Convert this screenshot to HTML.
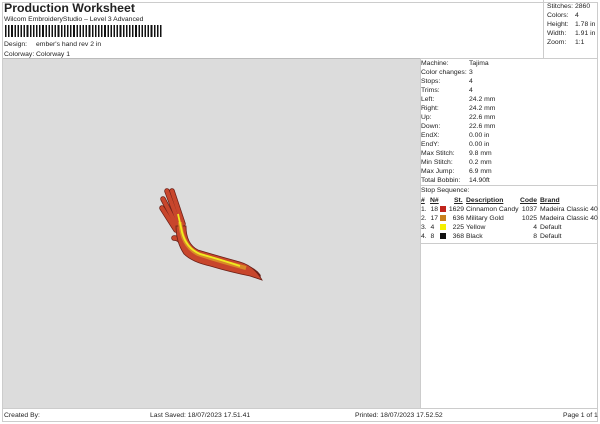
<!DOCTYPE html>
<html><head><style>
body{margin:0;width:600px;height:424px;background:#fff;position:relative;font-family:"Liberation Sans",sans-serif;font-size:6.8px;color:#222;overflow:hidden}
.a{position:absolute;white-space:nowrap;line-height:9px}
.u{text-decoration:underline;font-weight:bold}
</style></head><body>
<div class="a" style="left:4px;top:1px;font-size:12.3px;font-weight:bold;line-height:15px">Production Worksheet</div>
<div class="a" style="left:4px;top:15px">Wilcom EmbroideryStudio – Level 3 Advanced</div>
<div class="a" style="left:5px;top:25px;width:158px;height:12px;background:repeating-linear-gradient(90deg,#111 0 1.6px,#fff 1.6px 3.1px)"></div>
<div class="a" style="left:4px;top:40px">Design:</div><div class="a" style="left:36px;top:40px">ember's hand rev 2 in</div>
<div class="a" style="left:4px;top:50px">Colorway:</div><div class="a" style="left:36px;top:50px">Colorway 1</div>
<div class="a" style="left:2px;top:2px;width:596px;height:420px;border:1px solid #ccc;box-sizing:border-box"></div>
<div class="a" style="left:543px;top:0;width:1px;height:58px;background:#ccc"></div>
<div class="a" style="left:547px;top:2px">Stitches:<br>Colors:<br>Height:<br>Width:<br>Zoom:</div>
<div class="a" style="left:575px;top:2px">2860<br>4<br>1.78 in<br>1.91 in<br>1:1</div>
<div class="a" style="left:3px;top:58px;width:417px;height:350px;background:#dcdcdc;border-top:1px solid #bbb"></div>
<div class="a" style="left:420px;top:58px;width:178px;height:1px;background:#ccc"></div>
<div class="a" style="left:420px;top:58px;width:1px;height:350px;background:#ccc"></div>
<div class="a" style="left:421px;top:59px">Machine:<br>Color changes:<br>Stops:<br>Trims:<br>Left:<br>Right:<br>Up:<br>Down:<br>EndX:<br>EndY:<br>Max Stitch:<br>Min Stitch:<br>Max Jump:<br>Total Bobbin:</div>
<div class="a" style="left:469px;top:59px">Tajima<br>3<br>4<br>4<br>24.2 mm<br>24.2 mm<br>22.6 mm<br>22.6 mm<br>0.00 in<br>0.00 in<br>9.8 mm<br>0.2 mm<br>6.9 mm<br>14.90ft</div>
<div class="a" style="left:420px;top:185px;width:178px;height:1px;background:#ccc"></div>
<div class="a" style="left:421px;top:186px">Stop Sequence:</div>
<div class="a" style="left:421px;top:196px"><span class="u">#</span></div>
<div class="a" style="left:430px;top:196px"><span class="u">N#</span></div>
<div class="a" style="left:454px;top:196px"><span class="u">St.</span></div>
<div class="a" style="left:466px;top:196px"><span class="u">Description</span></div>
<div class="a" style="left:520px;top:196px"><span class="u">Code</span></div>
<div class="a" style="left:540px;top:196px"><span class="u">Brand</span></div>
<div class="a" style="left:421px;top:205px">1.&nbsp; 18<br>2.&nbsp; 17<br>3.&nbsp; 4<br>4.&nbsp; 8</div>
<div class="a" style="left:440px;top:206px;width:6px;height:6px;background:#c0241c"></div>
<div class="a" style="left:440px;top:215px;width:6px;height:6px;background:#c8801c"></div>
<div class="a" style="left:440px;top:224px;width:6px;height:6px;background:#f4f000"></div>
<div class="a" style="left:440px;top:233px;width:6px;height:6px;background:#111"></div>
<div class="a" style="left:446px;top:205px;width:18px;text-align:right">1629<br>636<br>225<br>368</div>
<div class="a" style="left:466px;top:205px">Cinnamon Candy<br>Military Gold<br>Yellow<br>Black</div>
<div class="a" style="left:516px;top:205px;width:21px;text-align:right">1037<br>1025<br>4<br>8</div>
<div class="a" style="left:540px;top:205px">Madeira Classic 40<br>Madeira Classic 40<br>Default<br>Default</div>
<div class="a" style="left:420px;top:243px;width:178px;height:1px;background:#ccc"></div>
<div class="a" style="left:2px;top:408px;width:596px;height:1px;background:#ccc"></div>
<div class="a" style="left:4px;top:411px">Created By:</div>
<div class="a" style="left:150px;top:411px">Last Saved: 18/07/2023 17.51.41</div>
<div class="a" style="left:355px;top:411px">Printed: 18/07/2023 17.52.52</div>
<div class="a" style="left:563px;top:411px">Page 1 of 1</div>
<svg class="a" style="left:0;top:0" width="600" height="424">
<g fill="none" stroke="#6a2018" stroke-linecap="round" stroke-width="5.5">
<path d="M167,191 L180,226"/><path d="M172,191 L183,224"/><path d="M163,199 L178,228"/><path d="M162,208 L176,230"/>
<path d="M174,238 Q180,238 182,244"/>
<path d="M180,230 Q183,248 196,254 Q215,260 238,266 Q252,268 258,276"/>
</g>
<g fill="none" stroke="#c8462c" stroke-linecap="round" stroke-width="4">
<path d="M167,191 L180,226"/><path d="M172,191 L183,224"/><path d="M163,199 L178,228"/><path d="M162,208 L176,230"/>
<path d="M174,238 Q180,238 182,244"/>
</g>
<path d="M176,226 L186,226 Q186,244 198,250 Q218,256 240,262 Q254,266 262,280 L250,276 Q230,272 210,266 Q192,262 184,254 Q176,242 176,226Z" fill="#c8462c" stroke="#6a2018" stroke-width="0.8"/>
<path d="M180,222 Q182,246 198,254 Q222,262 246,268" fill="none" stroke="#d88a28" stroke-width="4"/>
<path d="M178,214 L182,232 Q186,248 200,254 Q222,260 240,266" fill="none" stroke="#f0ec20" stroke-width="1.8"/>
</svg>
</body></html>
